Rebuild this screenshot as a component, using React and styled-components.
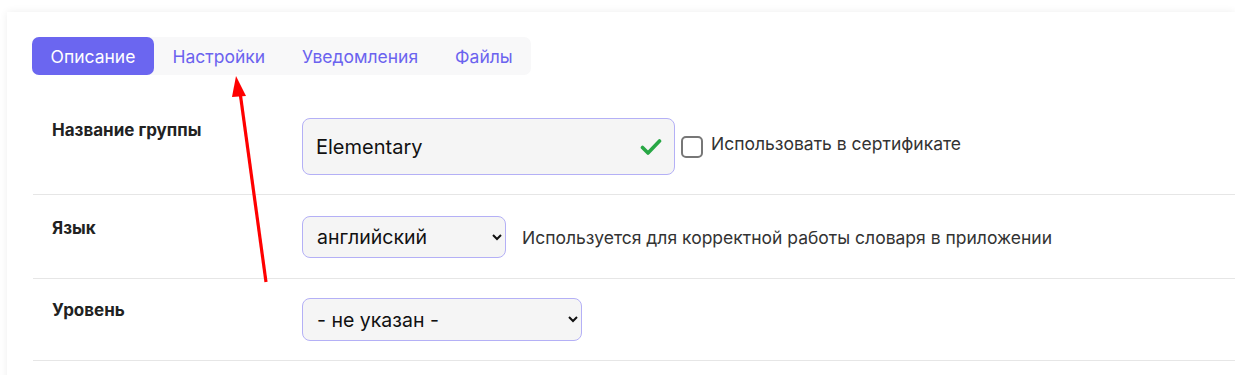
import React from "react";
import styled, { createGlobalStyle } from "styled-components";

const GlobalStyle = createGlobalStyle`
  html, body {
    margin: 0;
    padding: 0;
    background: #ffffff;
  }
  body {
    font-family: Inter, "Noto Sans", sans-serif;
    color: #212529;
  }
`;

const Page = styled.div`
  position: relative;
  width: 1235px;
  height: 375px;
  overflow: hidden;
  padding: 12px 0 0 7px;
  box-sizing: border-box;
`;

const Card = styled.div`
  background: #fff;
  box-shadow: 0 0 8px rgba(0, 0, 0, 0.07);
  padding: 25px 0 0 25px;
  min-height: 400px;
`;

const Tabs = styled.div`
  display: inline-flex;
  background: #f8f8f9;
  border-radius: 7px;
  margin-bottom: 22px;
`;

const Tab = styled.div`
  height: 38px;
  display: flex;
  align-items: center;
  padding: 0 18.5px;
  border-radius: 7px;
  font-size: 17.5px;
  color: ${(p) => (p.$active ? "#ffffff" : "#6b63ef")};
  background: ${(p) => (p.$active ? "#6b66f0" : "transparent")};
`;

const Rows = styled.div`
  display: flex;
  flex-direction: column;
  margin-left: 1px;
`;

const Row = styled.div`
  display: grid;
  grid-template-columns: 250px 1fr;
  padding: ${(p) => p.$pad || "21px"} 0 ${(p) => p.$padBottom || "21px"} 19px;
  border-bottom: 1px solid #e6e6e6;
`;

const Label = styled.div`
  font-weight: 700;
  font-size: 17px;
  line-height: 24px;
  color: #222;
`;

const Control = styled.div`
  display: flex;
  align-items: center;
  gap: 8px;
`;

const InputBox = styled.div`
  width: 373px;
  height: 57px;
  box-sizing: border-box;
  border: 1px solid #b4b0f6;
  border-radius: 8px;
  background: #f5f5f5;
  display: flex;
  align-items: center;
  justify-content: space-between;
  padding: 0 12px 0 13px;
  font-size: 20px;
  color: #111;
`;

const CheckLabel = styled.label`
  display: flex;
  align-items: center;
  gap: 8px;
  font-size: 17.5px;
  color: #333;
  margin-top: -6px;
  margin-left: -2px;
`;

const Box = styled.span`
  width: 22px;
  height: 22px;
  box-sizing: border-box;
  border: 2px solid #777;
  border-radius: 5px;
  margin-top: 6px;
`;

const Select = styled.select`
  width: ${(p) => p.$w}px;
  height: ${(p) => p.$h}px;
  border: 1px solid #b4b0f6;
  border-radius: 8px;
  background: #f5f5f5;
  font-family: Inter, "Noto Sans", sans-serif;
  font-size: 19.5px;
  color: #111;
  padding: 0 11px 0 10px;
  outline: none;
`;

const Hint = styled.span`
  font-size: 17.5px;
  color: #333;
  margin-left: 8px;
`;

const Arrow = styled.svg`
  position: absolute;
  left: 0;
  top: 0;
  pointer-events: none;
`;

const CheckIcon = () => (
  <svg width="22" height="18" viewBox="0 0 22 18">
    <path
      d="M2.5 9.5 L8 15 L19.5 3"
      fill="none"
      stroke="#28a745"
      strokeWidth="3.6"
      strokeLinecap="round"
      strokeLinejoin="round"
    />
  </svg>
);

export default function App() {
  return (
    <Page>
      <GlobalStyle />
      <Card>
        <Tabs>
          <Tab $active>Описание</Tab>
          <Tab>Настройки</Tab>
          <Tab>Уведомления</Tab>
          <Tab>Файлы</Tab>
        </Tabs>
        <Rows>
          <Row $padBottom="19px">
            <Label>Название группы</Label>
            <Control>
              <InputBox>
                <span>Elementary</span>
                <CheckIcon />
              </InputBox>
              <CheckLabel>
                <Box />
                Использовать в сертификате
              </CheckLabel>
            </Control>
          </Row>
          <Row $padBottom="20px">
            <Label>Язык</Label>
            <Control>
              <Select $w={204} $h={42} defaultValue="en">
                <option value="en">английский</option>
              </Select>
              <Hint>Используется для корректной работы словаря в приложении</Hint>
            </Control>
          </Row>
          <Row $pad="19px" $padBottom="19px">
            <Label>Уровень</Label>
            <Control>
              <Select $w={280} $h={43} defaultValue="">
                <option value="">- не указан -</option>
              </Select>
            </Control>
          </Row>
        </Rows>
      </Card>
      <Arrow width="1235" height="375">
        <line x1="266" y1="282" x2="240" y2="92" stroke="#ff0000" strokeWidth="3.2" />
        <polygon points="236,76 246,96 232,97" fill="#ff0000" />
      </Arrow>
    </Page>
  );
}
